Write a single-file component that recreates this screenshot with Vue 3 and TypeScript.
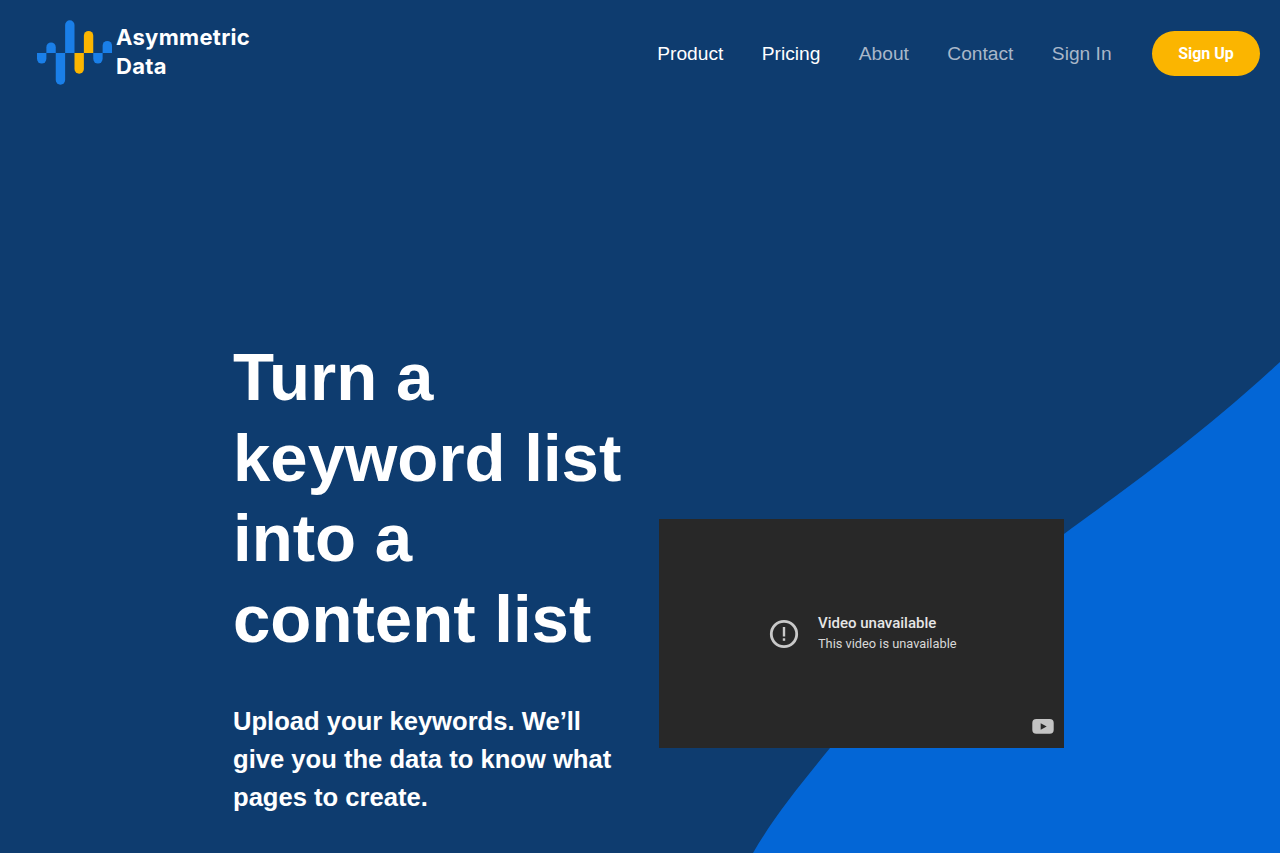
<script setup lang="ts">
interface NavLink { label: string; bright: boolean }
const links: NavLink[] = [
  { label: 'Product', bright: true },
  { label: 'Pricing', bright: true },
  { label: 'About', bright: false },
  { label: 'Contact', bright: false },
  { label: 'Sign In', bright: false },
]

const BLUE = '#1a7fe8'
const GOLD = '#fbb500'
const AXIS = 33
const W = 9.375
const R = W / 2
const specs: [number, string][] = [
  [10.5, BLUE], [-10.5, BLUE], [31.7, BLUE], [-32.7, BLUE],
  [20.7, GOLD], [-22, GOLD], [10.5, BLUE], [-12, BLUE],
]
const bars = specs.map(([len, fill], i) => {
  const x = i * W
  const d = len > 0
    ? `M${x} ${AXIS}V${AXIS + len - R}A${R} ${R} 0 0 0 ${x + W} ${AXIS + len - R}V${AXIS}Z`
    : `M${x} ${AXIS}V${AXIS + len + R}A${R} ${R} 0 0 1 ${x + W} ${AXIS + len + R}V${AXIS}Z`
  return { d, fill }
})
</script>

<template>
  <div class="page">
    <svg class="curve" viewBox="0 0 1280 853" preserveAspectRatio="none" aria-hidden="true">
      <path d="M1280 362 C1190 445 1110 500 1064 534 L830 748 C800 785 775 815 753 853 L1280 853 Z" fill="#0366d6" />
    </svg>
    <header class="header">
      <div class="brand">
        <svg class="logo" width="75" height="66" viewBox="0 0 75 66" aria-hidden="true">
          <path v-for="(bar, i) in bars" :key="i" :d="bar.d" :fill="bar.fill" />
        </svg>
        <div class="brand-name">Asymmetric<br />Data</div>
      </div>
      <nav class="nav">
        <a v-for="link in links" :key="link.label" href="#" class="nav-link" :class="{ bright: link.bright }">{{ link.label }}</a>
        <a href="#" class="signup">Sign Up</a>
      </nav>
    </header>
    <main class="hero">
      <section class="copy">
        <h1>Turn a keyword list into a content list</h1>
        <p>Upload your keywords. We’ll give you the data to know what pages to create.</p>
      </section>
      <div class="video">
        <div class="message">
          <svg class="alert" width="30" height="30" viewBox="0 0 30 30" aria-hidden="true">
            <circle cx="15" cy="15" r="12.700" fill="none" stroke="#c9c9c9" stroke-width="2.800" />
            <rect x="13.800" y="8" width="2.400" height="9.500" fill="#c9c9c9" />
            <rect x="13.800" y="19.300" width="2.400" height="2.500" fill="#c9c9c9" />
          </svg>
          <div class="v-text">
            <div class="v-title">Video unavailable</div>
            <div class="v-sub">This video is unavailable</div>
          </div>
        </div>
        <svg class="yt" width="22" height="15" viewBox="0 0 22 15" aria-hidden="true">
          <rect x="0.300" y="0" width="21.400" height="14.800" rx="4" fill="#c4c4c4" />
          <path d="M8.700 4.300 L14.700 7.500 L8.700 10.800 Z" fill="#2a2a2a" />
        </svg>
      </div>
    </main>
  </div>
</template>

<style>
html, body { margin: 0; background: #0e3c6f; }
</style>

<style scoped>
.page {
  position: relative;
  width: 1280px;
  height: 853px;
  overflow: hidden;
  background: #0e3c6f;
  font-family: "Liberation Sans", Arial, sans-serif;
  color: #fff;
}
.curve { position: absolute; inset: 0; width: 100%; height: 100%; }
.header {
  position: relative;
  display: flex;
  justify-content: space-between;
  align-items: flex-start;
  padding: 20px 20px 0 37px;
  height: 85px;
  box-sizing: border-box;
}
.brand { display: flex; align-items: flex-start; gap: 4px; }
.logo { display: block; }
.brand-name {
  font-family: Inter, "Noto Sans", sans-serif;
  font-weight: 700;
  font-size: 22px;
  letter-spacing: 0.3px;
  line-height: 29px;
  margin-top: 3px;
  color: #fff;
}
.nav { display: flex; align-items: center; gap: 38.400px; margin-top: 11px; }
.nav-link {
  font-size: 19.200px;
  line-height: 45px;
  color: #a9b7c9;
  text-decoration: none;
}
.nav-link.bright { color: #fff; }
.signup {
  display: flex;
  align-items: center;
  justify-content: center;
  width: 108px;
  height: 45px;
  margin-left: 2px;
  border-radius: 23px;
  background: #fbb500;
  color: #fff;
  font-family: Roboto, sans-serif;
  font-weight: 700;
  font-size: 16px;
  text-decoration: none;
}
.hero {
  position: relative;
  display: flex;
  align-items: flex-start;
  padding: 252px 0 0 233px;
  gap: 26px;
}
.copy { width: 400px; flex: none; }
h1 {
  margin: 0;
  font-size: 67.200px;
  line-height: 80.640px;
  font-weight: 700;
}
.copy p {
  margin: 42px 0 0;
  font-size: 25.600px;
  line-height: 38.400px;
  font-weight: 700;
}
.video {
  position: relative;
  flex: none;
  width: 405px;
  height: 229px;
  margin-top: 182px;
  background: #282828;
  font-family: Roboto, sans-serif;
  display: flex;
  align-items: center;
  justify-content: center;
}
.message { display: flex; align-items: center; gap: 19px; margin-left: 2.500px; }
.alert { display: block; }
.v-text { margin-bottom: 2px; }
.v-title { font-size: 15px; font-weight: 500; line-height: 20px; color: #e6e6e6; }
.v-sub { font-size: 12.800px; line-height: 18px; margin-top: 2px; color: #d8d8d8; }
.yt { position: absolute; right: 10px; bottom: 14px; }
</style>
